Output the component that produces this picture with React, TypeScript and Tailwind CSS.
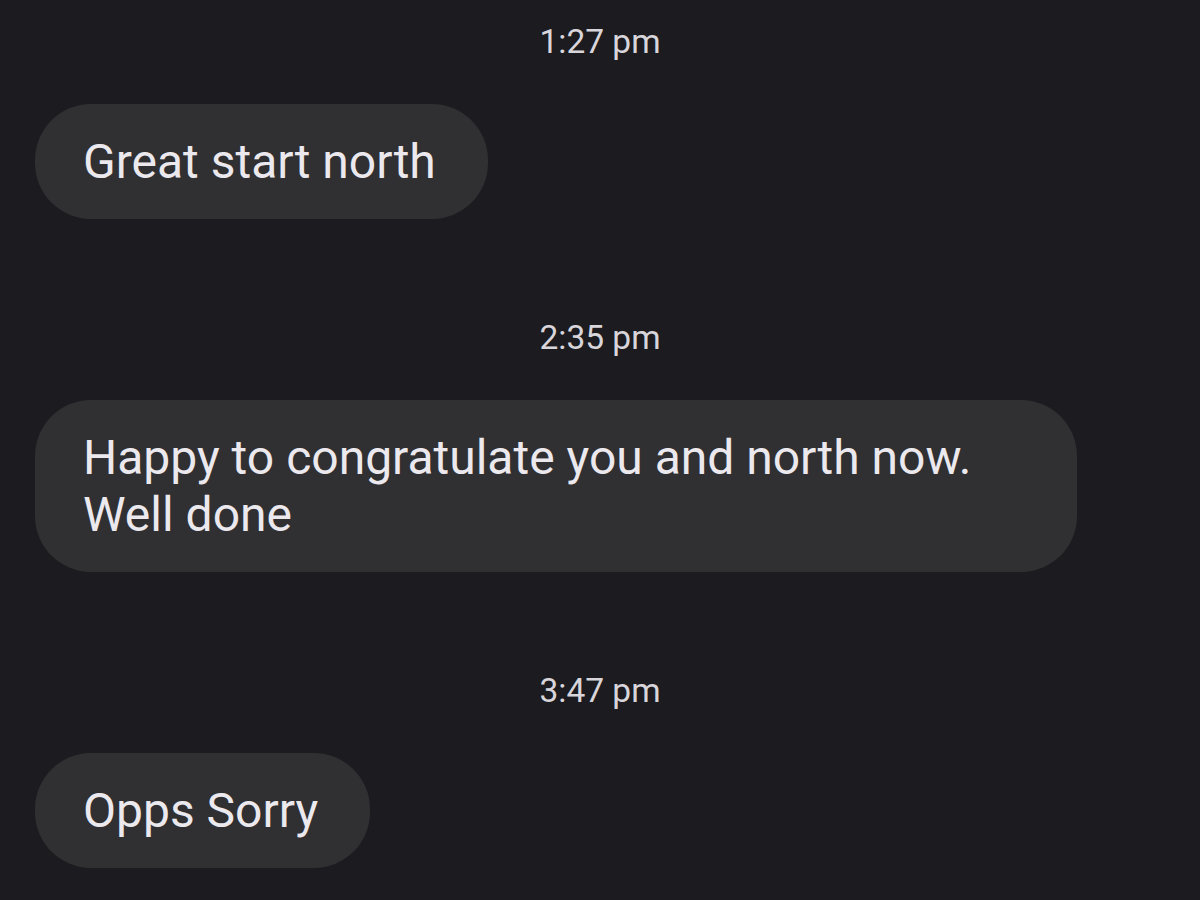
const messages = [
  { time: '1:27 pm', text: 'Great start north' },
  { time: '2:35 pm', text: 'Happy to congratulate you and north now. Well done' },
  { time: '3:47 pm', text: 'Opps Sorry' },
]

/**
 * Incoming message thread, dark theme
 */
export default function App() {
  return (
    <div
      className="min-h-[900px] w-full bg-[#1c1b1f] px-[35px] pt-[22px] pb-10"
      style={{ fontFamily: 'Roboto, "Noto Sans", sans-serif' }}
    >
      <div className="flex flex-col gap-[99px]">
        {messages.map((m) => (
          <div key={m.time} className="flex flex-col">
            {/* Timestamp */}
            <div className="mb-[42px] h-[40px] text-center text-[33.5px] leading-[40px] text-[#d8d6db]">
              {m.time}
            </div>

            {/* Bubble */}
            <div className="w-fit max-w-[1042px] rounded-[56px] bg-[#302f32] pl-12 pr-[52px] py-[29px] text-[48px] leading-[57px] text-[#ebe9ee]">
              {m.text}
            </div>
          </div>
        ))}
      </div>
    </div>
  )
}
